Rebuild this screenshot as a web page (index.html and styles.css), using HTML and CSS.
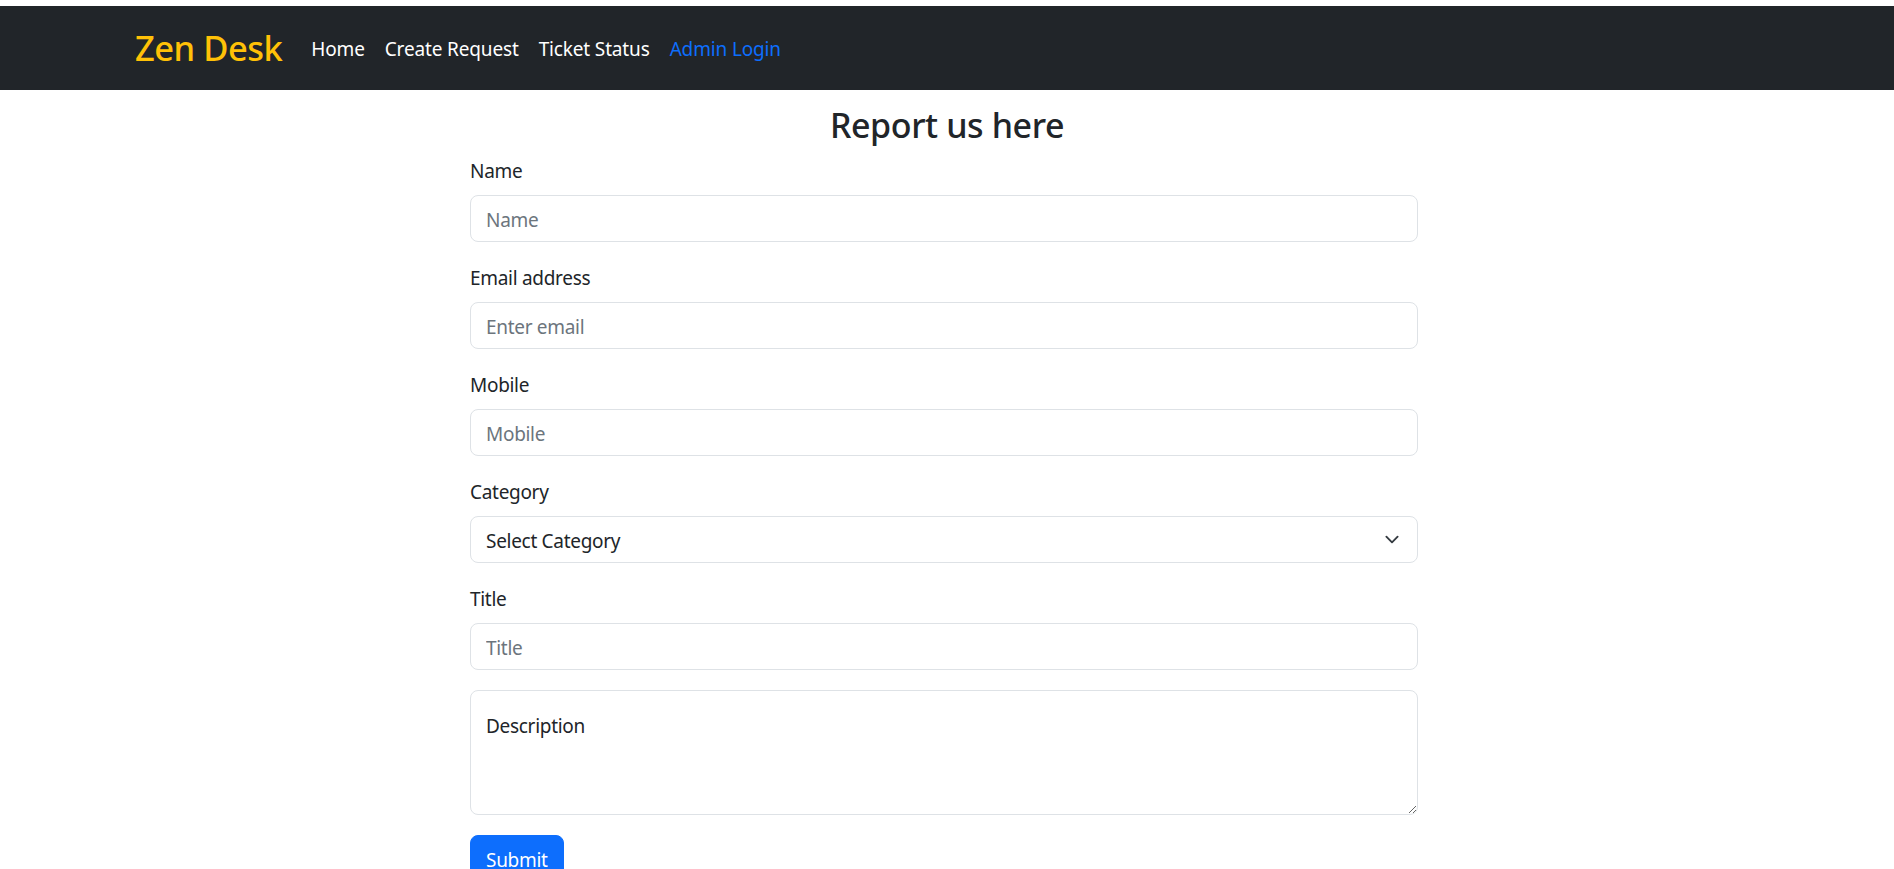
FILE: index.html
```html
<!DOCTYPE html>
<html lang="en">
<head>
<meta charset="utf-8">
<title>Zen Desk</title>
<link rel="stylesheet" href="styles.css">
</head>
<body>
<nav class="navbar">
  <div class="container nav-inner">
    <a class="brand" href="#">Zen Desk</a>
    <ul class="nav-links">
      <li><a class="nav-link" href="#">Home</a></li>
      <li><a class="nav-link" href="#">Create Request</a></li>
      <li><a class="nav-link" href="#">Ticket Status</a></li>
      <li><a class="nav-link active" href="#">Admin Login</a></li>
    </ul>
  </div>
</nav>
<main class="main">
  <h3 class="title">Report us here</h3>
  <form class="form">
    <div class="group">
      <label class="label" for="name">Name</label>
      <input class="control" id="name" type="text" placeholder="Name">
    </div>
    <div class="group">
      <label class="label" for="email">Email address</label>
      <input class="control" id="email" type="email" placeholder="Enter email">
    </div>
    <div class="group">
      <label class="label" for="mobile">Mobile</label>
      <input class="control" id="mobile" type="text" placeholder="Mobile">
    </div>
    <div class="group">
      <label class="label" for="category">Category</label>
      <select class="control select" id="category">
        <option>Select Category</option>
      </select>
    </div>
    <div class="group">
      <label class="label" for="title">Title</label>
      <input class="control" id="title" type="text" placeholder="Title">
    </div>
    <div class="group">
      <textarea class="control textarea" id="description">Description</textarea>
    </div>
    <button class="btn" type="submit">Submit</button>
  </form>
</main>
</body>
</html>
```

FILE: styles.css
```css
* { box-sizing: border-box; }

html, body {
  margin: 0;
  padding: 0;
}

body {
  padding-top: 6px;
  font-family: "Noto Sans", "Open Sans", sans-serif;
  font-size: 20px;
  line-height: 1.5;
  color: #212529;
  background: #fff;
}

.navbar {
  background: #212529;
  height: 84px;
}

.container {
  max-width: 1650px;
  margin: 0 auto;
  padding: 0 13px;
}

.nav-inner {
  height: 100%;
  display: flex;
  align-items: center;
}

.brand {
  color: #ffc107;
  text-decoration: none;
  font-size: 34.5px;
  font-weight: 500;
  line-height: 1.5;
  margin-right: 19px;
  letter-spacing: -0.5px;
}

.nav-links {
  display: flex;
  list-style: none;
  margin: 0;
  padding: 0;
  margin-top: 2px;
}

.nav-link {
  display: block;
  padding: 10px 10px;
  color: #fff;
  text-decoration: none;
  font-size: 19px;
  letter-spacing: -0.15px;
}

.nav-link.active {
  color: #0d6efd;
}

.main {
  padding-top: 15px;
}

.title {
  margin: 0 0 9px;
  text-align: center;
  font-size: 34px;
  font-weight: 500;
  line-height: 1.2;
  letter-spacing: -0.4px;
}

.form {
  width: 948px;
  margin-left: calc(50% - 477px);
}

.group {
  margin-bottom: 20px;
}

.label {
  display: block;
  padding-top: 1px;
  margin-bottom: 9px;
  font-size: 19px;
  line-height: 30px;
  letter-spacing: -0.3px;
}

.control {
  display: block;
  width: 100%;
  height: 47px;
  padding: 9px 15px 5px;
  font-family: inherit;
  font-size: 19px;
  line-height: 1.5;
  color: #212529;
  background: #fff;
  border: 1px solid #dee2e6;
  border-radius: 8px;
  letter-spacing: -0.3px;
}

.control::placeholder {
  color: #6c757d;
}

.select {
  appearance: none;
  -webkit-appearance: none;
  padding-right: 45px;
  background-image: url("data:image/svg+xml,%3csvg xmlns='http://www.w3.org/2000/svg' viewBox='0 0 16 16'%3e%3cpath fill='none' stroke='%23343a40' stroke-linecap='round' stroke-linejoin='round' stroke-width='2' d='m2 5 6 6 6-6'/%3e%3c/svg%3e");
  background-repeat: no-repeat;
  background-position: right 15px center;
  background-size: 20px 15px;
}

.textarea {
  height: 125px;
  padding-top: 21px;
  resize: vertical;
}

.btn {
  display: inline-block;
  padding: 9px 15px 5px;
  height: 47px;
  font-family: inherit;
  font-size: 19px;
  line-height: 1.5;
  color: #fff;
  background: #0d6efd;
  border: 1px solid #0d6efd;
  border-radius: 8px;
  letter-spacing: -0.3px;
}
```
